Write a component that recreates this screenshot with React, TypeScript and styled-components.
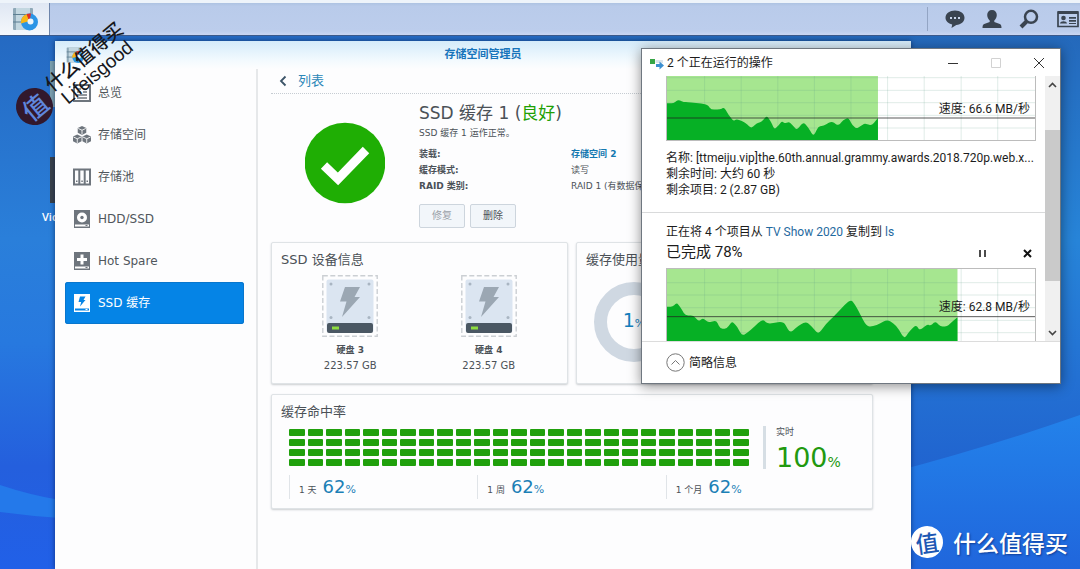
import React from "react";
import styled, { createGlobalStyle, css } from "styled-components";

const appFont = `"DejaVu Sans", "Noto Sans CJK SC", sans-serif`;
const systemFont = `Roboto, "Noto Sans CJK SC", sans-serif`;

const GlobalStyle = createGlobalStyle`
  *, *::before, *::after { box-sizing: border-box; }
  body { margin: 0; font-family: ${appFont}; color: #4b5157; }
  button { font: inherit; color: inherit; background: none; border: 0; padding: 0; cursor: pointer; }
  a { text-decoration: none; }
  svg { display: block; flex: none; }
  h1, h2, h3, p, dl, dd, dt, ul { margin: 0; padding: 0; font-weight: 400; list-style: none; }
`;

/* ---------- desktop ---------- */

const Desktop = styled.div`
  position: relative;
  display: flex;
  flex-direction: column;
  height: 100vh;
  overflow: hidden;
  background: linear-gradient(180deg, #2466be 0%, #2a7fda 42%, #2779df 60%, #245fdd 82%, #2160e8 100%);
`;

const Wallpaper = styled.svg`
  position: absolute;
  inset: 0;
  width: 100%;
  height: 100%;
`;

const Taskbar = styled.header`
  position: relative;
  display: flex;
  align-items: center;
  justify-content: space-between;
  height: 36px;
  border-top: 3px solid #eef4fa;
  border-bottom: 1px solid #3c5a8c;
  background: linear-gradient(180deg, #adc3e2 0, #b9cbea 10%, #bccdec 88%, #c9d6f2 100%);
`;

const TaskButton = styled.button`
  display: flex;
  align-items: center;
  justify-content: center;
  width: 50px;
  height: 32px;
  border-right: 1px solid #6d85ab;
  background: linear-gradient(180deg, #dfe7f3, #f5f8fc);
`;

const Tray = styled.div`
  display: flex;
  align-items: center;
  height: 24px;
  padding-left: 17px;
  border-left: 1px solid #93a5c4;
  gap: 17px;
  color: #3a4450;
`;

const TrayButton = styled.button`
  display: flex;
  justify-content: center;
  width: 20px;

  &:last-child { width: 24px; }
`;

const Workspace = styled.main`
  position: relative;
  display: flex;
  flex: 1;
  min-height: 0;
`;

const Shortcut = styled.a<{ $top: number }>`
  position: absolute;
  top: ${(p) => p.$top}px;
  left: 42px;
  display: flex;
  flex-direction: column;
  gap: 4px;
  font: 600 11px/20px "Open Sans", sans-serif;
  color: #fff;
`;

const ShortcutTile = styled.span<{ $tone: string }>`
  width: 44px;
  height: 46px;
  margin-left: 8px;
  background: ${(p) => p.$tone};
`;

/* ---------- storage manager window ---------- */

const StorageWindow = styled.section`
  position: relative;
  display: flex;
  flex: 1;
  flex-direction: column;
  margin: 5px 169px 0 55px;
  background: #fdfdfe;
  box-shadow: 0 0 5px rgba(0, 20, 60, 0.6);
`;

const WindowHeader = styled.header`
  display: flex;
  flex: none;
  align-items: center;
  height: 28px;
  padding: 0 11px;
  background: linear-gradient(180deg, #d4ebfa 0%, #f3fafe 70%, #fdfdfe 100%);
`;

const WindowTitle = styled.h1`
  flex: 1;
  padding-right: 18px;
  font-size: 11px;
  line-height: 16px;
  font-weight: 700;
  text-align: center;
  color: #1774bb;
`;

const WindowBody = styled.div`
  display: flex;
  flex: 1;
  min-height: 0;
`;

const Sidebar = styled.nav`
  flex: none;
  width: 203px;
  padding: 3px 12px 0 10px;
  border-right: 2px solid #e6e8ea;
`;

const NavItem = styled.button<{ $active?: boolean }>`
  display: flex;
  align-items: center;
  gap: 7px;
  width: 100%;
  height: 42px;
  padding-left: 8px;
  border-radius: 3px;
  font-size: 12px;
  line-height: 18px;
  color: #50565c;

  svg { color: #6e757d; }

  ${(p) =>
    p.$active &&
    css`
      background: #0584e6;
      box-shadow: inset 0 0 0 1px #0876cd;
      color: #fff;
      svg { color: #fff; }
    `}
`;

const Content = styled.div`
  flex: 1;
  min-width: 0;
  padding: 0 38px 0 13px;
`;

const BackLink = styled.a`
  display: flex;
  align-items: center;
  gap: 11px;
  height: 25px;
  margin-right: -38px;
  padding-left: 8px;
  border-bottom: 1px dotted #c6ccd2;
  font-size: 13px;
  line-height: 20px;
  color: #2b87b8;
`;

const Summary = styled.section`
  display: flex;
  align-items: center;
  gap: 34px;
  height: 138px;
  margin-bottom: 10px;
  padding-left: 34px;
`;

const SummaryText = styled.div`
  padding-top: 3px;
`;

const CacheName = styled.h2`
  font-size: 17px;
  line-height: 24px;
  white-space: nowrap;

  span { color: #21a004; }
`;

const CacheNote = styled.p`
  font-size: 9px;
  line-height: 16px;
  margin-bottom: 5px;
`;

const Details = styled.dl`
  display: grid;
  grid-template-columns: 152px auto;
  grid-auto-rows: 16px;
  margin-bottom: 10px;
  font-size: 9px;
  line-height: 16px;
  white-space: nowrap;

  dt { font-weight: 700; }
  a { font-weight: 700; color: #1478b0; }
`;

const Actions = styled.div`
  display: flex;
  gap: 5px;
`;

const ActionButton = styled.button`
  width: 46px;
  height: 24px;
  border: 1px solid #cdd5dd;
  border-radius: 2px;
  background: #f2f6fa;
  font-size: 10px;
  line-height: 16px;

  &:disabled { color: #9ba2a9; }
`;

const Cards = styled.div`
  display: grid;
  grid-template-columns: 1fr 1fr;
  gap: 10px 8px;
`;

const Card = styled.section<{ $wide?: boolean }>`
  height: ${(p) => (p.$wide ? 115 : 142)}px;
  padding: 8px 9px;
  border: 1px solid #dfe3e6;
  border-radius: 2px;
  background: #fdfdfe;
  box-shadow: 0 1px 2px rgba(60, 70, 80, 0.25);
  ${(p) => p.$wide && "grid-column: 1 / -1;"}
`;

const CardTitle = styled.h3`
  font-size: 13px;
  line-height: 18px;
  white-space: nowrap;
`;

const Drives = styled.ul`
  display: grid;
  grid-template-columns: 1fr 1fr;
  padding-top: 6px;
  text-align: center;
  font-size: 9px;
  line-height: 16px;

  svg { margin: 0 auto 5px; }
  strong { display: block; }
`;

const DriveSize = styled.span`
  font-size: 10px;
`;

const Donut = styled.div`
  display: flex;
  align-items: center;
  justify-content: center;
  width: 80px;
  height: 80px;
  margin: 13px 0 0 8px;
  border: 13px solid #cfd8e2;
  border-radius: 50%;
  white-space: nowrap;
`;

const Percent = styled.span<{ $size: number; $color: string }>`
  font-size: ${(p) => p.$size}px;
  line-height: 24px;
  color: ${(p) => p.$color};

  small { font-size: ${(p) => (p.$size > 20 ? 14 : 11)}px; }
`;

const HitRate = styled.div`
  display: flex;
  align-items: center;
  padding: 5px 9px 0 8px;
`;

const Blocks = styled.div`
  display: grid;
  flex: 1;
  grid-template-columns: repeat(25, 1fr);
  gap: 3px;
`;

const Block = styled.span`
  height: 7px;
  border-radius: 1px;
  background: #20a00c;
`;

const Realtime = styled.div`
  display: flex;
  flex-direction: column;
  gap: 8px;
  width: 91px;
  height: 43px;
  margin-left: 14px;
  padding-left: 10px;
  border-left: 3px solid #d6dee4;
  font-size: 9px;
  line-height: 12px;
`;

const Periods = styled.div`
  display: grid;
  grid-template-columns: repeat(3, 1fr);
  padding: 6px 9px 0 8px;
`;

const Period = styled.div`
  display: flex;
  align-items: baseline;
  gap: 6px;
  height: 24px;
  padding-left: 9px;
  border-left: 1px solid #e0e4e8;
  font-size: 9px;
  line-height: 24px;
`;

/* ---------- file copy dialog ---------- */

const CopyDialog = styled.section`
  position: absolute;
  top: 12px;
  right: 19px;
  display: flex;
  flex-direction: column;
  width: 420px;
  border: 1px solid #6f7780;
  background: #fff;
  box-shadow: 0 2px 12px rgba(0, 0, 0, 0.45);
  font-family: ${systemFont};
  font-size: 12px;
  line-height: 16px;
  color: #1c1c1c;
`;

const DialogBar = styled.header`
  display: flex;
  align-items: center;
  height: 27px;
  padding-left: 8px;
`;

const DialogTitle = styled.h2`
  flex: 1;
  padding-left: 3px;
  font-size: 12px;
`;

const CaptionButton = styled.button<{ $faint?: boolean }>`
  display: flex;
  align-items: center;
  justify-content: center;
  width: 43px;
  height: 27px;
  color: ${(p) => (p.$faint ? "#d2d2d2" : "#333")};
`;

const DialogBody = styled.div`
  display: flex;
  height: 265px;
`;

const Jobs = styled.div`
  flex: 1;
  min-width: 0;
  overflow: hidden;
`;

const Job = styled.article`
  padding: 0 9px 14px 24px;

  & + & {
    padding-top: 11px;
    border-top: 1px solid #d9dadb;
  }

  a { color: #1f6aa0; }
`;

const JobInfo = styled.p`
  white-space: nowrap;
`;

const JobHead = styled.div`
  display: flex;
  align-items: center;
  justify-content: space-between;
  height: 24px;
  margin-bottom: 4px;
  font-size: 15px;
  line-height: 24px;
`;

const JobControls = styled.div`
  display: flex;
  gap: 36px;
  padding: 3px 4px 0 0;
`;

const ChartFrame = styled.div<{ $continued?: boolean }>`
  position: relative;
  height: ${(p) => (p.$continued ? 65 : 80)}px;
  margin-bottom: ${(p) => (p.$continued ? 9 : 0)}px;
  border: 1px solid #bcbcbc;
  ${(p) => p.$continued && "border-top: 0;"}
`;

const ChartSpeed = styled.span<{ $top: number }>`
  position: absolute;
  top: ${(p) => p.$top}px;
  right: 5px;
`;

const Scrollbar = styled.div`
  display: flex;
  flex: none;
  flex-direction: column;
  width: 15px;
  background: #f0f0f0;
`;

const ScrollButton = styled.button`
  display: flex;
  align-items: center;
  justify-content: center;
  width: 15px;
  height: 17px;
`;

const ScrollTrack = styled.div`
  flex: 1;
  padding-top: 37px;
`;

const ScrollThumb = styled.div`
  height: 151px;
  background: #cacaca;
`;

const DialogFooter = styled.footer`
  display: flex;
  align-items: center;
  height: 42px;
  padding-left: 24px;
  border-top: 1px solid #dcdcdc;
`;

const FoldButton = styled.button`
  display: flex;
  align-items: center;
  gap: 4px;
`;

/* ---------- watermarks ---------- */

const Stamp = styled.div`
  position: absolute;
  top: 88px;
  left: 16px;
  display: flex;
  align-items: center;
  justify-content: center;
  width: 37px;
  height: 37px;
  border-radius: 50%;
  background: #32182c;
  font: 500 25px/37px "Noto Sans CJK SC", sans-serif;
  color: #5f86dc;
  transform: rotate(-40deg);
`;

const Scribble = styled.div`
  position: absolute;
  top: 45px;
  left: 42px;
  width: 98px;
  font: 500 19px/20px "Liberation Sans", "Noto Sans CJK SC", sans-serif;
  color: #16181c;
  text-align: center;
  white-space: nowrap;
  transform: rotate(-40deg);
`;

const Brand = styled.div`
  position: absolute;
  right: 12px;
  bottom: 11px;
  display: flex;
  align-items: center;
  gap: 10px;
  font: 500 23px/32px "Noto Sans CJK SC", sans-serif;
  color: #fff;
  text-shadow: 1px 1px 2px rgba(0, 30, 100, 0.6);
`;

const BrandMark = styled.span`
  width: 32px;
  height: 32px;
  border-radius: 50%;
  background: #fff;
  color: #1d58b4;
  text-align: center;
  text-shadow: none;
  transform: rotate(-8deg);
`;

/* ---------- drawings ---------- */

const StorageLogo = ({ size }: { size: number }) => (
  <svg width={size} height={size} viewBox="0 0 26 26" aria-hidden="true">
    <rect x="1" y="2" width="20" height="22" rx="1" fill="#8fa9b8" />
    <path d="M4 2h14v22H4z" fill="#c3d7e0" />
    <path d="M1 8.500h20M1 16h20" stroke="#5d7f92" strokeWidth="1.200" />
    <circle cx="17.500" cy="16" r="8.500" fill="#2b95e6" />
    <path d="M17.500 16v-1L9 17.500A8.500 8.500 0 0 1 15 7.900z" fill="#f7b718" />
    <path d="M17.500 16 14.500 8a8.500 8.500 0 0 1 4.500-.5z" fill="#e02e28" />
    <circle cx="18.500" cy="15.500" r="3" fill="#eef6fb" />
  </svg>
);

const OverviewIcon = () => (
  <svg width="18" height="18" viewBox="0 0 18 18" aria-hidden="true">
    <path d="M1 1h16v16H1z" fill="none" stroke="currentColor" strokeWidth="2" />
    <path d="M4 5h4M4 8h4M10 5h4M10 8h4M4 11h10M4 14h10" stroke="currentColor" strokeWidth="1.500" />
  </svg>
);

const Cube = ({ x, y }: { x: number; y: number }) => (
  <g transform={`translate(${x} ${y})`}>
    <path d="M5 0l4.500 2v5L5 9.500.5 7V2z" fill="currentColor" />
    <path d="M1 2.600l4 1.900 4-1.900M5 4.500V9" fill="none" stroke="#fff" strokeWidth=".9" />
  </g>
);

const VolumeIcon = () => (
  <svg width="18" height="18" viewBox="0 0 19 19" aria-hidden="true">
    <Cube x={4.500} y={0} />
    <Cube x={-0.500} y={9} />
    <Cube x={9.500} y={9} />
  </svg>
);

const PoolIcon = () => (
  <svg width="18" height="18" viewBox="0 0 18 18" aria-hidden="true">
    <path d="M1 1.500h16v15H1zM6.300 1v16M11.700 1v16" fill="none" stroke="currentColor" strokeWidth="2" />
    <path d="M3 12.500h1.500v1.500H3zM8.300 12.500h1.500v1.500H8.300zM13.500 12.500H15v1.500h-1.500z" fill="currentColor" />
  </svg>
);

const DiskShape = ({ children, cut }: { children: React.ReactNode; cut: string }) => (
  <svg width="18" height="18" viewBox="0 0 18 18" aria-hidden="true">
    <path d="M1 0h16v18H1z" fill="currentColor" />
    <path d="M2 14.500h14v2H2z" fill={cut} />
    <path d="M12.500 15h2v1h-2z" fill="currentColor" />
    {children}
  </svg>
);

const HddIcon = () => (
  <DiskShape cut="#fff">
    <circle cx="9" cy="7.500" r="5" fill="#fff" />
    <circle cx="9" cy="7.500" r="1.700" fill="currentColor" />
  </DiskShape>
);

const SpareIcon = () => (
  <DiskShape cut="#fff">
    <path d="M9 2.500v10M4 7.500h10" stroke="#fff" strokeWidth="3" />
  </DiskShape>
);

const CacheIcon = () => (
  <DiskShape cut="#0584e6">
    <path d="M7 2.500h5.500L10.500 6H12.500L7 12.500 8.200 8H5.500z" fill="#0584e6" />
  </DiskShape>
);

const HealthyMark = () => (
  <svg width="80" height="82" viewBox="0 0 80 82" role="img" aria-label="良好">
    <circle cx="40" cy="41" r="40.300" fill="#1fae04" />
    <path d="M19 43.500 33 57 61 28" fill="none" stroke="#fff" strokeWidth="9" />
  </svg>
);

const DriveDrawing = () => (
  <svg width="56" height="62" viewBox="0 0 56 62" aria-hidden="true">
    <rect x=".8" y=".8" width="54.400" height="60.400" fill="none" stroke="#cbcfd3" strokeWidth="1.400" strokeDasharray="5 2.500" />
    <rect x="4.500" y="4.500" width="47" height="53" rx="2" fill="#dbe5f1" />
    <path d="M23 12h15l-5.500 10H38L20 42l4.500-15.500H18z" fill="#9ba7b3" />
    <rect x="5" y="48" width="46" height="10" rx="2" fill="#4a5763" />
    <rect x="10" y="51.500" width="7" height="3" fill="#8ddc3f" />
    {[[9, 9], [47, 9], [9, 42.500], [47, 42.500]].map(([x, y]) => (
      <circle key={`${x}-${y}`} cx={x} cy={y} r="1.500" fill="#a9b5c2" />
    ))}
  </svg>
);

const CopyIcon = () => (
  <svg width="14" height="14" viewBox="0 0 14 14" aria-hidden="true">
    <path d="M0 3h5v5H0z" fill="#37a545" />
    <path d="M5.500 4H13v3H5.500z" fill="#dce5ec" />
    <path d="M6 8h3.500V5.500L14 9.500 9.500 13.500V11H6z" fill="#3d8fd0" />
  </svg>
);

const chartX = [193, 303, 413, 523, 633, 743, 853, 964, 1074];

/* Area outline whose corners are rounded over a third of each segment. */
function areaPath(points: number[][], floor: number) {
  const first = points[0];
  const last = points[points.length - 1];
  const between = (a: number[], b: number[], t: number) =>
    `${a[0] + (b[0] - a[0]) * t} ${a[1] + (b[1] - a[1]) * t}`;
  let d = `M${first[0]} ${floor}L${first[0]} ${first[1]}`;
  for (let i = 1; i < points.length - 1; i++) {
    const p = points[i];
    d += `L${between(p, points[i - 1], 0.35)}Q${p[0]} ${p[1]} ${between(p, points[i + 1], 0.35)}`;
  }
  return `${d}L${last[0]} ${last[1]}L${last[0]} ${floor}Z`;
}

type Chart = { top: number; bottom: number; done: number; speedLine: number; rows: number[]; points: number[][] };

const firstChart: Chart = {
  top: 108, bottom: 300, done: 714, speedLine: 234, rows: [113, 151, 188, 226, 264],
  points: [[80, 190], [100, 190], [113, 179], [130, 186], [150, 187], [200, 192], [213, 209], [240, 208], [252, 202], [265, 225], [280, 243], [290, 237], [315, 247], [333, 265], [350, 250], [365, 245], [380, 227], [392, 245], [403, 268], [415, 256], [425, 244], [435, 250], [447, 246], [457, 255], [470, 270], [490, 246], [505, 263], [520, 289], [535, 260], [550, 257], [575, 244], [595, 257], [610, 240], [625, 233], [637, 255], [650, 266], [665, 256], [675, 250], [695, 257], [714, 234]],
};

const secondChart: Chart = {
  top: 190, bottom: 409, done: 953, speedLine: 333, rows: [231, 268, 306, 344, 381],
  points: [[80, 303], [97, 303], [110, 291], [122, 308], [135, 329], [160, 330], [175, 347], [188, 337], [205, 351], [228, 344], [240, 369], [260, 369], [275, 347], [290, 362], [306, 391], [330, 375], [367, 340], [383, 355], [430, 347], [450, 382], [475, 360], [498, 348], [515, 362], [535, 386], [560, 352], [580, 334], [632, 279], [650, 305], [680, 364], [710, 359], [742, 341], [770, 360], [793, 400], [810, 375], [828, 358], [840, 374], [862, 356], [872, 360], [887, 347], [902, 363], [922, 362], [935, 350], [953, 335]],
};

const SpeedChart = ({ top, bottom, done, speedLine, rows, points }: Chart) => (
  <svg width="100%" height={Math.round((bottom - top) / 3)} viewBox={`80 ${top} 1106 ${bottom - top}`} preserveAspectRatio="none" aria-hidden="true">
    <rect x="80" y={top} width={done - 80} height={bottom - top} fill="#a6e690" />
    <g stroke="#5f9c88" strokeOpacity=".2" strokeWidth="3">
      {chartX.map((x) => <path key={x} d={`M${x} ${top}V${bottom}`} />)}
      {rows.map((y) => <path key={y} d={`M80 ${y}H1186`} />)}
    </g>
    <path d={areaPath(points, bottom)} fill="#06b025" />
    <path d={`M80 ${speedLine}H1186`} stroke="#222" strokeOpacity=".75" strokeWidth="3" />
  </svg>
);

/* ---------- page ---------- */

const navItems = [
  { label: "总览", icon: <OverviewIcon /> },
  { label: "存储空间", icon: <VolumeIcon /> },
  { label: "存储池", icon: <PoolIcon /> },
  { label: "HDD/SSD", icon: <HddIcon /> },
  { label: "Hot Spare", icon: <SpareIcon /> },
  { label: "SSD 缓存", icon: <CacheIcon />, active: true },
];

const periods = ["1 天", "1 周", "1 个月"];

export default function App() {
  return (
    <Desktop>
      <GlobalStyle />
      <Wallpaper viewBox="0 0 1080 569" preserveAspectRatio="none" aria-hidden="true">
        <defs>
          <linearGradient id="band" x1="0" y1="0" x2="0" y2="1">
            <stop offset="0" stopColor="#2382ea" />
            <stop offset=".6" stopColor="#2171e2" />
            <stop offset="1" stopColor="#2066dc" />
          </linearGradient>
          <linearGradient id="glow" x1="0" y1="0" x2="0" y2="1">
            <stop offset="0" stopColor="#2464b6" />
            <stop offset=".5" stopColor="#2784d8" />
            <stop offset="1" stopColor="#2062cf" />
          </linearGradient>
        </defs>
        <path d="M540 0H1080V480H540z" fill="url(#glow)" />
        <path d="M700 515Q900 478 1080 415V569H700z" fill="url(#band)" />
        <path d="M0 485Q30 495 60 500V518Q30 516 0 512z" fill="#2479ea" />
      </Wallpaper>

      <Taskbar>
        <TaskButton aria-label="存储空间管理员"><StorageLogo size={26} /></TaskButton>
        <Tray>
          <TrayButton aria-label="消息">
            <svg width="20" height="20" viewBox="0 0 20 20">
              <path d="M10 1.500c5.300 0 9.500 3 9.500 7.300 0 4-3.500 6.900-8.200 7.200L6.500 19l.7-3.600C3.300 14.500.5 12 .5 8.800.5 4.500 4.700 1.500 10 1.500z" fill="currentColor" />
              <path d="M5 8h2v2H5zM9 8h2v2H9zM13 8h2v2h-2z" fill="#c9d6ec" />
            </svg>
          </TrayButton>
          <TrayButton aria-label="用户">
            <svg width="20" height="20" viewBox="0 0 20 20">
              <path d="M10 1c3 0 4.800 2 4.800 5 0 2.700-1.300 4.400-2.500 5.500v1.500l5.500 2c1.200.5 1.700 1.500 1.700 4H.5c0-2.500.5-3.500 1.700-4l5.500-2v-1.500C6.500 10.400 5.200 8.700 5.200 6c0-3 1.800-5 4.800-5z" fill="currentColor" />
            </svg>
          </TrayButton>
          <TrayButton aria-label="搜索">
            <svg width="20" height="20" viewBox="0 0 20 20" fill="none" stroke="currentColor">
              <circle cx="12" cy="7.800" r="6" strokeWidth="2.500" />
              <path d="M7.500 12.500 2 18" strokeWidth="4" />
            </svg>
          </TrayButton>
          <TrayButton aria-label="小组件">
            <svg width="22" height="18" viewBox="0 0 22 18">
              <path d="M1 2h20v14.500H1z" fill="none" stroke="currentColor" strokeWidth="1.700" />
              <path d="M1 1h20v3H1z" fill="currentColor" />
              <circle cx="6.500" cy="8" r="2.300" fill="currentColor" />
              <path d="M3 13.500c.3-3 6.700-3 7 0zM12 7h7v1.700h-7zM12 10h7v1.700h-7zM12 13h7v1h-7z" fill="currentColor" />
            </svg>
          </TrayButton>
        </Tray>
      </Taskbar>

      <Workspace>
        <Shortcut href="#files" $top={25} aria-label="文件"><ShortcutTile $tone="#7ea2b0" /></Shortcut>
        <Shortcut href="#video" $top={121}><ShortcutTile $tone="#39414a" />Video</Shortcut>

        <StorageWindow>
          <WindowHeader>
            <StorageLogo size={18} />
            <WindowTitle>存储空间管理员</WindowTitle>
          </WindowHeader>
          <WindowBody>
            <Sidebar>
              {navItems.map((item) => (
                <NavItem key={item.label} $active={item.active}>
                  {item.icon}
                  {item.label}
                </NavItem>
              ))}
            </Sidebar>
            <Content>
              <BackLink href="#list">
                <svg width="8" height="12" viewBox="0 0 8 12" fill="none" stroke="#3c5468" strokeWidth="1.800">
                  <path d="M6.500 1.500 2 6l4.500 4.500" />
                </svg>
                列表
              </BackLink>

              <Summary>
                <HealthyMark />
                <SummaryText>
                  <CacheName>SSD 缓存 1 (<span>良好</span>)</CacheName>
                  <CacheNote>SSD 缓存 1 运作正常。</CacheNote>
                  <Details>
                    <dt>装载:</dt>
                    <dd><a href="#volume2">存储空间 2</a></dd>
                    <dt>缓存模式:</dt>
                    <dd>读写</dd>
                    <dt>RAID 类别:</dt>
                    <dd>RAID 1 (有数据保护)</dd>
                  </Details>
                  <Actions>
                    <ActionButton disabled>修复</ActionButton>
                    <ActionButton>删除</ActionButton>
                  </Actions>
                </SummaryText>
              </Summary>

              <Cards>
                <Card>
                  <CardTitle>SSD 设备信息</CardTitle>
                  <Drives>
                    {["硬盘 3", "硬盘 4"].map((name) => (
                      <li key={name}>
                        <DriveDrawing />
                        <strong>{name}</strong>
                        <DriveSize>223.57 GB</DriveSize>
                      </li>
                    ))}
                  </Drives>
                </Card>
                <Card>
                  <CardTitle>缓存使用量</CardTitle>
                  <Donut>
                    <Percent $size={19} $color="#1580bd">1<small>%</small></Percent>
                  </Donut>
                </Card>
                <Card $wide>
                  <CardTitle>缓存命中率</CardTitle>
                  <HitRate>
                    <Blocks>
                      {Array.from({ length: 100 }, (_, i) => <Block key={i} />)}
                    </Blocks>
                    <Realtime>
                      实时
                      <Percent $size={27} $color="#22990f">100<small>%</small></Percent>
                    </Realtime>
                  </HitRate>
                  <Periods>
                    {periods.map((label) => (
                      <Period key={label}>
                        {label}
                        <Percent $size={18} $color="#1c80b6">62<small>%</small></Percent>
                      </Period>
                    ))}
                  </Periods>
                </Card>
              </Cards>
            </Content>
          </WindowBody>
        </StorageWindow>

        <CopyDialog>
          <DialogBar>
            <CopyIcon />
            <DialogTitle>2 个正在运行的操作</DialogTitle>
            <CaptionButton aria-label="最小化">
              <svg width="10" height="10" viewBox="0 0 10 10" stroke="currentColor"><path d="M0 5.500h10" /></svg>
            </CaptionButton>
            <CaptionButton aria-label="最大化" $faint>
              <svg width="10" height="10" viewBox="0 0 10 10" fill="none" stroke="currentColor"><path d="M.5.5h9v9h-9z" /></svg>
            </CaptionButton>
            <CaptionButton aria-label="关闭">
              <svg width="10" height="10" viewBox="0 0 10 10" stroke="currentColor"><path d="M0 0l10 10M10 0L0 10" /></svg>
            </CaptionButton>
          </DialogBar>
          <DialogBody>
            <Jobs>
              <Job>
                <ChartFrame $continued>
                  <SpeedChart {...firstChart} />
                  <ChartSpeed $top={25}>速度: 66.6 MB/秒</ChartSpeed>
                </ChartFrame>
                <JobInfo>名称: [ttmeiju.vip]the.60th.annual.grammy.awards.2018.720p.web.x...</JobInfo>
                <JobInfo>剩余时间: 大约 60 秒</JobInfo>
                <JobInfo>剩余项目: 2 (2.87 GB)</JobInfo>
              </Job>
              <Job>
                <JobInfo>正在将 4 个项目从 <a href="#source">TV Show 2020</a> 复制到 <a href="#target">ls</a></JobInfo>
                <JobHead>
                  已完成 78%
                  <JobControls>
                    <button aria-label="暂停">
                      <svg width="9" height="9" viewBox="0 0 9 9" stroke="#111" strokeWidth="1.500"><path d="M2 1v7M7 1v7" /></svg>
                    </button>
                    <button aria-label="取消">
                      <svg width="9" height="9" viewBox="0 0 9 9" stroke="#111" strokeWidth="2"><path d="M1 1l7 7M8 1L1 8" /></svg>
                    </button>
                  </JobControls>
                </JobHead>
                <ChartFrame>
                  <SpeedChart {...secondChart} />
                  <ChartSpeed $top={30}>速度: 62.8 MB/秒</ChartSpeed>
                </ChartFrame>
              </Job>
            </Jobs>
            <Scrollbar>
              <ScrollButton aria-label="向上滚动">
                <svg width="9" height="6" viewBox="0 0 9 6" fill="none" stroke="#444" strokeWidth="1.600"><path d="M1 5l3.500-3.500L8 5" /></svg>
              </ScrollButton>
              <ScrollTrack><ScrollThumb /></ScrollTrack>
              <ScrollButton aria-label="向下滚动">
                <svg width="9" height="6" viewBox="0 0 9 6" fill="none" stroke="#444" strokeWidth="1.600"><path d="M1 1l3.500 3.500L8 1" /></svg>
              </ScrollButton>
            </Scrollbar>
          </DialogBody>
          <DialogFooter>
            <FoldButton>
              <svg width="19" height="19" viewBox="0 0 19 19" fill="none" stroke="#777">
                <circle cx="9.500" cy="9.500" r="8.700" />
                <path d="M5.500 11.500l4-4 4 4" />
              </svg>
              简略信息
            </FoldButton>
          </DialogFooter>
        </CopyDialog>
      </Workspace>

      <Stamp>值</Stamp>
      <Scribble>什么值得买<br />Lifeisgood</Scribble>
      <Brand><BrandMark>值</BrandMark>什么值得买</Brand>
    </Desktop>
  );
}
